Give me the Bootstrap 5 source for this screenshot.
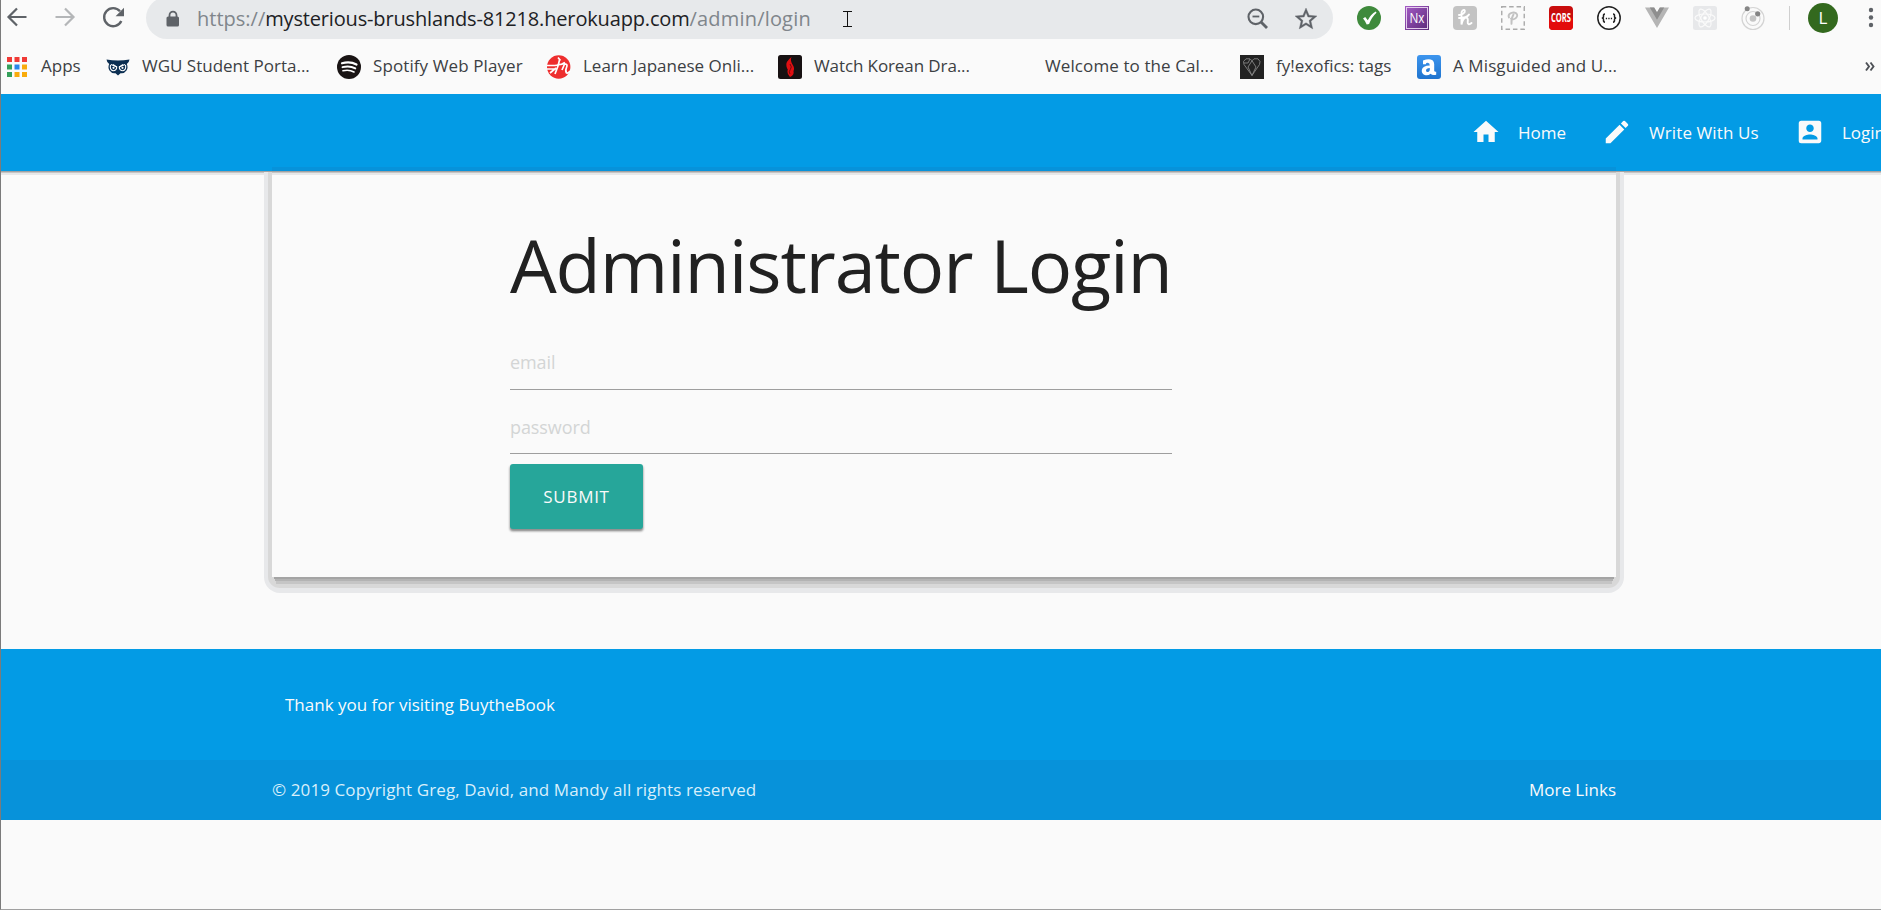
<!DOCTYPE html>
<html lang="en">
<head>
<meta charset="utf-8">
<meta name="viewport" content="width=device-width, initial-scale=1">
<title>Administrator Login</title>
<link href="https://cdn.jsdelivr.net/npm/bootstrap@5.3.0/dist/css/bootstrap.min.css" rel="stylesheet">
<style>
html,body{height:100%}
body{font-family:"Open Sans","Noto Sans",sans-serif;font-size:17px;line-height:24px;background:#fafafa;color:#212121;border-left:1px solid #7b7b7b;border-bottom:1px solid #a0a0a0;overflow:hidden}
svg{display:block;flex:none;overflow:visible}
svg text{font-family:"Open Sans","Noto Sans",sans-serif}

/* browser chrome */
.toolbar{height:39px}
.tool-ico{width:48px;height:36px}
.nav-keys{width:145px;padding-left:2px}
.nav-keys .tool-ico{height:34px;width:24px}
.omnibox{width:1187px;height:42px;margin-top:-3px;background:#e7e9eb;border-radius:21px;padding:4px 15px 2px 18px}
.url{margin-left:15px;font-size:20px;color:#80868b}
.url .host{color:#202124;letter-spacing:-.16px}
.url .route{letter-spacing:.18px}
.caret-i{margin-left:31px}
.extensions{padding-left:12px}
.tool-rule{width:1px;height:24px;background:#cfcfcf;margin:6px 0 0 12px}
.avatar{width:30px;height:30px;margin:3px 0 0 18px;background:#33691e;color:#fff;font-size:17px}
.bookmarks{height:55px;padding-left:4px;color:#3c4043}
.bm{gap:12px;height:54px;flex:none;width:231px;padding-bottom:1px}
.bm svg{position:relative;top:1px}
.bm-a{width:101px}.bm-b{width:231px}.bm-c{width:210px}.bm-d{width:177px}
.tight{letter-spacing:-.1px}.loose{letter-spacing:.1px}

/* page */
.site-nav{height:77px;background:#039be5;color:#fafafa;box-shadow:0 1px #a2a2a2,0 2px #c5c5c5,0 4px #e7e8e9;padding-left:1470px}
.entry{flex:none;gap:17px;color:#fafafa}
.entry svg{margin-top:-2px}
.entry-home{width:131px}.entry-write{width:193px}
.login-card{z-index:1;width:1344px;height:406px;margin-left:271px;padding:40px 0 0 238px}
.login-card::before{content:"";position:absolute;z-index:-1;inset:1px -8px -16px;background:#d8d8d8;border:solid #e7e8ea;border-width:0 4px 5px;border-radius:0 0 16px 16px}
.login-card::after{content:"";position:absolute;z-index:-1;inset:0;background:#fafafa;
 box-shadow:inset 0 1px #a2a2a2,inset 0 2px #c5c5c5,inset 0 4px #e7e8e9,0 4px 0 -2px #a4a4a4,0 7px 0 -3px #b3b3b3,0 11px 0 -4px #c5c5c5,0 -4px #0792da}
.login-form{width:662px}
.login-form h1{font-size:74px;line-height:108px;font-weight:400;margin:0;letter-spacing:-1.17px}
.field{border:0;border-bottom:1px solid #9e9e9e;border-radius:0;background:none;padding:0;font-size:18px}
.field:focus{background:none;box-shadow:none}
.field::placeholder{color:#d3d5d5;opacity:1;letter-spacing:-.08px}
.field-email{height:54px;margin-top:17px;padding-bottom:2px}
.field-pass{height:64px;padding-top:10px}
.btn-send{width:133px;height:65px;margin-top:10px;background:#26a69a;color:#fafafa;border:0;border-radius:3px;font-size:17px;letter-spacing:.7px;box-shadow:0 2px 2px #8e8e8e,0 2px 2px 1px #ddd}
.btn-send:hover{background:#26a69a;color:#fafafa}
.foot{margin-top:72px;background:#039be5;color:#fafafa}
.foot-top{height:111px;padding:0 0 0 284px}
.foot-bar{height:60px;background:#0792da;padding:0 265px 0 271px;color:#d8effb}
.foot-bar a{color:#fafafa}
</style>
</head>
<body>
<header>
  <div class="toolbar d-flex align-items-start">
    <div class="nav-keys d-flex">
      <span class="tool-ico d-flex align-items-center justify-content-end"><svg width="21" height="20" viewBox="0 0 21 20" fill="none" stroke="#5f6368" stroke-width="2.2"><path d="M20.500 10H2.500M11 1.500 2.500 10l8.500 8.500"/></svg></span>
      <span class="tool-ico d-flex align-items-center ms-4 ps-1"><svg width="21" height="20" viewBox="0 0 21 20" fill="none" stroke="#b4b6b8" stroke-width="2.200"><path d="M.5 10h18M10 1.500 18.500 10 10 18.500"/></svg></span>
      <span class="tool-ico d-flex align-items-center ms-4 ps-1"><svg width="22" height="21" viewBox="0 0 22 21"><path d="M18.300 14A9 9 0 1 1 17 4.300" fill="none" stroke="#5f6368" stroke-width="2.400"/><path d="M21 .8v8.400h-8.400z" fill="#5f6368"/></svg></span>
    </div>
    <div class="omnibox d-flex align-items-center">
      <svg width="18" height="18" viewBox="0 0 18 18"><path d="M5.500 8V5.200a3.500 3.500 0 0 1 7 0V8" fill="none" stroke="#5f6368" stroke-width="1.800"/><rect x="2.500" y="6.500" width="12.500" height="10" rx="1.600" fill="#5f6368"/></svg>
      <div class="url text-nowrap">https://<span class="host">mysterious-brushlands-81218.herokuapp.com</span><span class="route">/admin/login</span></div>
      <svg class="caret-i" width="11" height="17" viewBox="0 0 11 17" fill="none" stroke="#111"><path d="M1 .5h9M1 15.500h9M5.500.5v15"/></svg>
      <svg class="ms-auto" width="22" height="22" viewBox="0 0 22 22" fill="none" stroke="#5f6368"><circle cx="8.800" cy="8.800" r="7.300" stroke-width="2.100"/><path d="M5.500 8.500h6.800" stroke-width="1.800"/><path d="m14 14 6 6" stroke-width="2.800"/></svg>
      <svg width="24" height="24" viewBox="0 0 24 24" style="margin-left:25px"><path fill="#5f6368" stroke="#5f6368" stroke-width=".3" d="m22 9.240-7.190-.62L12 2 9.190 8.630 2 9.240l5.460 4.730L5.820 21 12 17.270 18.180 21l-1.630-7.030L22 9.240zM12 15.400l-3.760 2.270 1-4.280-3.320-2.880 4.380-.38L12 6.100l1.710 4.040 4.380.38-3.320 2.880 1 4.280L12 15.400z" transform="translate(-1.200 -1.200) scale(1.1)"/></svg>
    </div>
    <div class="extensions d-flex">
      <span class="tool-ico d-flex align-items-center justify-content-center"><svg width="24" height="24"><circle cx="12" cy="12" r="12" fill="#3f8a3c"/><path d="m6 12.500 2.200-1.500 2.600 3.200q3-6 8-8.700l.7 1.300q-4.500 4-7.400 11.200l-2.400.6q-1.200-3.400-3.700-6.100z" fill="#fff"/></svg></span>
      <span class="tool-ico d-flex align-items-center justify-content-center"><svg width="24" height="24"><defs><linearGradient id="nx" x2="1" y2="1"><stop stop-color="#a45bc6"/><stop offset="1" stop-color="#5b2a78"/></linearGradient></defs><rect width="24" height="24" fill="url(#nx)"/><rect x="1.500" y="1.500" width="21" height="21" fill="none" stroke="#e3cdec"/><text x="12" y="17" font-size="14" fill="#fff" text-anchor="middle" textLength="15" lengthAdjust="spacingAndGlyphs">Nx</text></svg></span>
      <span class="tool-ico d-flex align-items-center justify-content-center"><svg width="24" height="24"><rect width="24" height="24" rx="4" fill="#c3c3c3"/><path d="M6 9c3.500-.3 6.300-2.300 5.800-4.200S8.500 4.500 8.500 7v11.500C9 15 11 11.500 13 11.500s2 2.500 1.700 4.500 1.300 3.300 3.800 1M6 12c4 0 8.500-.8 10-3.500" fill="none" stroke="#fff" stroke-width="1.900" stroke-linecap="round"/></svg></span>
      <span class="tool-ico d-flex align-items-center justify-content-center"><svg width="24" height="24" fill="none"><rect x=".75" y=".75" width="22.500" height="22.500" stroke="#aaa" stroke-width="1.400" stroke-dasharray="4.500 2.900"/><path d="M8 11.500C6.500 8.500 10 6.300 13 6.500s4.300 3 2.300 5.200-4.500 1.800-5.300 1M12.500 8.500q-2.500 4-2 9.300" stroke="#c2c2c2" stroke-width="1.900" stroke-linecap="round"/></svg></span>
      <span class="tool-ico d-flex align-items-center justify-content-center"><svg width="24" height="24"><rect width="24" height="24" rx="4" fill="#c90d0d"/><path d="M0 12h24v8a4 4 0 0 1-4 4H4a4 4 0 0 1-4-4z" fill="#e30b0b"/><text x="12" y="16" font-size="12.500" font-weight="700" fill="#fff" text-anchor="middle" textLength="20" lengthAdjust="spacingAndGlyphs">CORS</text></svg></span>
      <span class="tool-ico d-flex align-items-center justify-content-center"><svg width="24" height="24"><circle cx="12" cy="12" r="11.200" fill="#fff" stroke="#222" stroke-width="1.500"/><path d="M8 8q-1.700 0-1.500 2t-1.700 2q1.900 0 1.700 2T8 16.200M16 8q1.700 0 1.500 2t1.700 2q-1.900 0-1.700 2t-1.500 2.200" fill="none" stroke="#222" stroke-width="1.500"/><path d="M8.800 12.500h1.300m1.200 0h1.300m1.200 0h1.300" stroke="#222" stroke-width="1.400"/></svg></span>
      <span class="tool-ico d-flex align-items-center justify-content-center"><svg width="24" height="24"><path d="M0 1.500h9l3 5 3-5h9L12 22z" fill="#b5b5b5"/><path d="M4.800 1.500h4.400l2.800 4.700 2.800-4.700h4.400L12 13.700z" fill="#8e8e8e"/></svg></span>
      <span class="tool-ico d-flex align-items-center justify-content-center"><svg width="24" height="24"><rect width="24" height="24" rx="2.500" fill="#e7e8ea"/><g fill="none" stroke="#fafafa" stroke-width="1.200"><ellipse cx="12" cy="12" rx="10" ry="4"/><ellipse cx="12" cy="12" rx="10" ry="4" transform="rotate(60 12 12)"/><ellipse cx="12" cy="12" rx="10" ry="4" transform="rotate(120 12 12)"/></g><circle cx="12" cy="12" r="1.800" fill="#fff"/></svg></span>
      <span class="tool-ico d-flex align-items-center justify-content-center"><svg width="24" height="24"><g fill="none" stroke="#d4d4d4" stroke-width="1.200"><circle cx="12" cy="12.500" r="11"/><circle cx="12" cy="12.500" r="7"/></g><circle cx="12" cy="12.500" r="3.300" fill="#c5c5c5"/><circle cx="6.200" cy="2.800" r="2.500" fill="#858585"/><circle cx="16.700" cy="7.800" r="2.600" fill="#858585"/></svg></span>
    </div>
    <span class="tool-rule"></span>
    <span class="avatar rounded-circle d-flex align-items-center justify-content-center">L</span>
    <svg width="8" height="24" style="margin:6px 0 0 29px" fill="#5f6368"><circle cx="4" cy="4" r="2.200"/><circle cx="4" cy="11.500" r="2.200"/><circle cx="4" cy="19" r="2.200"/></svg>
  </div>

  <nav class="bookmarks d-flex text-nowrap">
    <span class="bm bm-a d-flex align-items-center"><svg width="24" height="24"><path fill="#f03a36" d="M2 2h5v5H2zM9.500 2h5v5h-5zM17 2h5v5h-5z"/><path fill="#34a05a" d="M2 9.500h5v5H2zM2 17h5v5H2z"/><path fill="#2a86e8" d="M9.500 9.500h5v5h-5z"/><path fill="#f9ab0c" d="M17 9.500h5v5h-5zM9.500 17h5v5h-5zM17 17h5v5h-5z"/></svg>Apps</span>
    <span class="bm bm-b d-flex align-items-center"><svg width="24" height="24"><path fill="#0c2f52" d="M.5 4.500q5.500 1 11.500 1t11.500-1q-.5 3.500-2.700 4.500 1.600 3.500-.3 6.500-2.500 3.500-6 2.700L12 20.500l-2.500-2.300q-3.500.8-6-2.700-1.900-3-.3-6.500Q1 8 .5 4.500z"/><g fill="none" stroke="#fff" stroke-width="1.100"><path d="M4.500 9.800q-1 4.700 2.500 6 3.800-.3 3.700-3.800L7 9.500M19.500 9.800q1 4.700-2.500 6-3.800-.3-3.700-3.800L17 9.500"/><path d="M5 9.500 11 12M19 9.500 13 12"/></g><circle cx="7.500" cy="12.800" r="1.100" fill="#fff"/><circle cx="16.500" cy="12.800" r="1.100" fill="#fff"/></svg>WGU Student Porta...</span>
    <span class="bm bm-c d-flex align-items-center loose"><svg width="24" height="24"><circle cx="12" cy="12" r="12" fill="#191414"/><g fill="none" stroke="#fff" stroke-linecap="round"><path d="M5 8.300q8-2.300 14.500 1.200" stroke-width="2.200"/><path d="M5.500 12.200q7-2 12.800 1.200" stroke-width="1.900"/><path d="M6 15.800q6-1.500 11 1.200" stroke-width="1.600"/></g></svg>Spotify Web Player</span>
    <span class="bm d-flex align-items-center"><svg width="24" height="24"><circle cx="11.700" cy="12" r="11.700" fill="#ee2e2e"/><g fill="none" stroke="#fff" stroke-width="1.700"><path d="M0 10.500h8l3-.5M0 14h7M3 18l6-5M11 2.500l2.500 3M12.500 5 11 11l-3 8M10 10q5 0 8-2.500M18 8l-3 7M18 9q3 0 1.500 3.500t0 5.500q2 .5 3.500-2"/></g></svg>Learn Japanese Onli...</span>
    <span class="bm d-flex align-items-center tight"><svg width="24" height="24"><rect width="24" height="24" rx="2.500" fill="#171112"/><path d="M13.500 2q-6.500 5-5 9.500.5 2 1.300 3-1.300 3.500 2.200 7.500 4.500-2 3.500-6 1.500-3-1-6.500-2.500-4-1-7.500z" fill="#e00f12"/><path d="M12 9q2.500 3 .3 5.500T12 19" fill="none" stroke="#6d0b0c"/></svg>Watch Korean Dra...</span>
    <span class="bm d-flex align-items-center loose"><svg width="24" height="24"></svg>Welcome to the Cal...</span>
    <span class="bm bm-d d-flex align-items-center"><svg width="24" height="24"><rect width="24" height="24" fill="#222"/><path d="M12 20.500 4 9.500l-.5-3L6 3.800h4l2 2 2-2h4l2 2.700-.5 3zM12 5.800 8 12l4 8.500 4-8.500zM4 8h4l2-4" fill="none" stroke="#858585" stroke-width=".9"/></svg>fy!exofics: tags</span>
    <span class="bm d-flex align-items-center loose"><svg width="24" height="24"><defs><linearGradient id="an" x2="0" y2="1"><stop stop-color="#3d95ee"/><stop offset="1" stop-color="#1f74cf"/></linearGradient></defs><rect width="24" height="24" rx="3" fill="url(#an)"/><path d="M6 5.500q6-2.500 9.500-.3 1.700 1.300 1.700 4v6.600q.3 1.200 2 .9v3q-4 1.200-5.500-1-3 2.300-6 1.200-3.300-1.500-2.900-5 .8-4.300 8-4.400 0-2.600-2-2.700-2 0-2 1.400H6zm6.800 7.500q-3.800.2-3.800 2.400.3 2.200 2.300 1.500 1.500-.7 1.500-1.900z" fill="#fff"/></svg>A Misguided and U...</span>
    <svg class="align-self-center ms-auto" width="10" height="12" viewBox="0 0 10 12" style="margin-right:6px" fill="none" stroke="#4d5156" stroke-width="1.900"><path d="m1 1.500 3 4-3 4M5.500 1.500l3 4-3 4"/></svg>
  </nav>
</header>

<nav class="site-nav d-flex align-items-center text-nowrap">
  <a class="entry entry-home d-flex align-items-center text-decoration-none" href="#"><svg width="30" height="30" viewBox="0 0 24 24" fill="currentColor"><path d="M10 20v-6h4v6h5v-8h3L12 3 2 12h3v8z"/></svg>Home</a>
  <a class="entry entry-write d-flex align-items-center text-decoration-none loose" href="#"><svg width="30" height="30" viewBox="0 0 24 24" fill="currentColor"><path d="M3 17.250V21h3.750L17.810 9.940l-3.750-3.750L3 17.250zM20.710 7.040a1 1 0 0 0 0-1.410l-2.340-2.340a1 1 0 0 0-1.410 0l-1.830 1.830 3.750 3.750 1.830-1.830z"/></svg>Write With Us</a>
  <a class="entry d-flex align-items-center text-decoration-none" href="#"><svg width="30" height="30" viewBox="0 0 24 24" fill="currentColor"><path d="M3 5v14a2 2 0 0 0 2 2h14c1.100 0 2-.9 2-2V5a2 2 0 0 0-2-2H5a2 2 0 0 0-2 2zm12 4c0 1.660-1.340 3-3 3s-3-1.340-3-3 1.340-3 3-3 3 1.340 3 3zm-9 8c0-2 4-3.100 6-3.100s6 1.100 6 3.100v1H6v-1z"/></svg>Login</a>
</nav>

<main class="login-card position-relative">
  <form class="login-form">
    <h1 class="text-nowrap">Administrator Login</h1>
    <input class="form-control field field-email" type="email" placeholder="email">
    <input class="form-control field field-pass" type="password" placeholder="password">
    <button class="btn btn-send" type="button">SUBMIT</button>
  </form>
</main>

<footer class="foot">
  <div class="foot-top d-flex align-items-center">Thank you for visiting BuytheBook</div>
  <div class="foot-bar d-flex align-items-center justify-content-between"><span class="loose">© 2019 Copyright Greg, David, and Mandy all rights reserved</span><a class="text-decoration-none" href="#">More Links</a></div>
</footer>
<script src="https://cdn.jsdelivr.net/npm/bootstrap@5.3.0/dist/js/bootstrap.bundle.min.js"></script>
</body>
</html>
